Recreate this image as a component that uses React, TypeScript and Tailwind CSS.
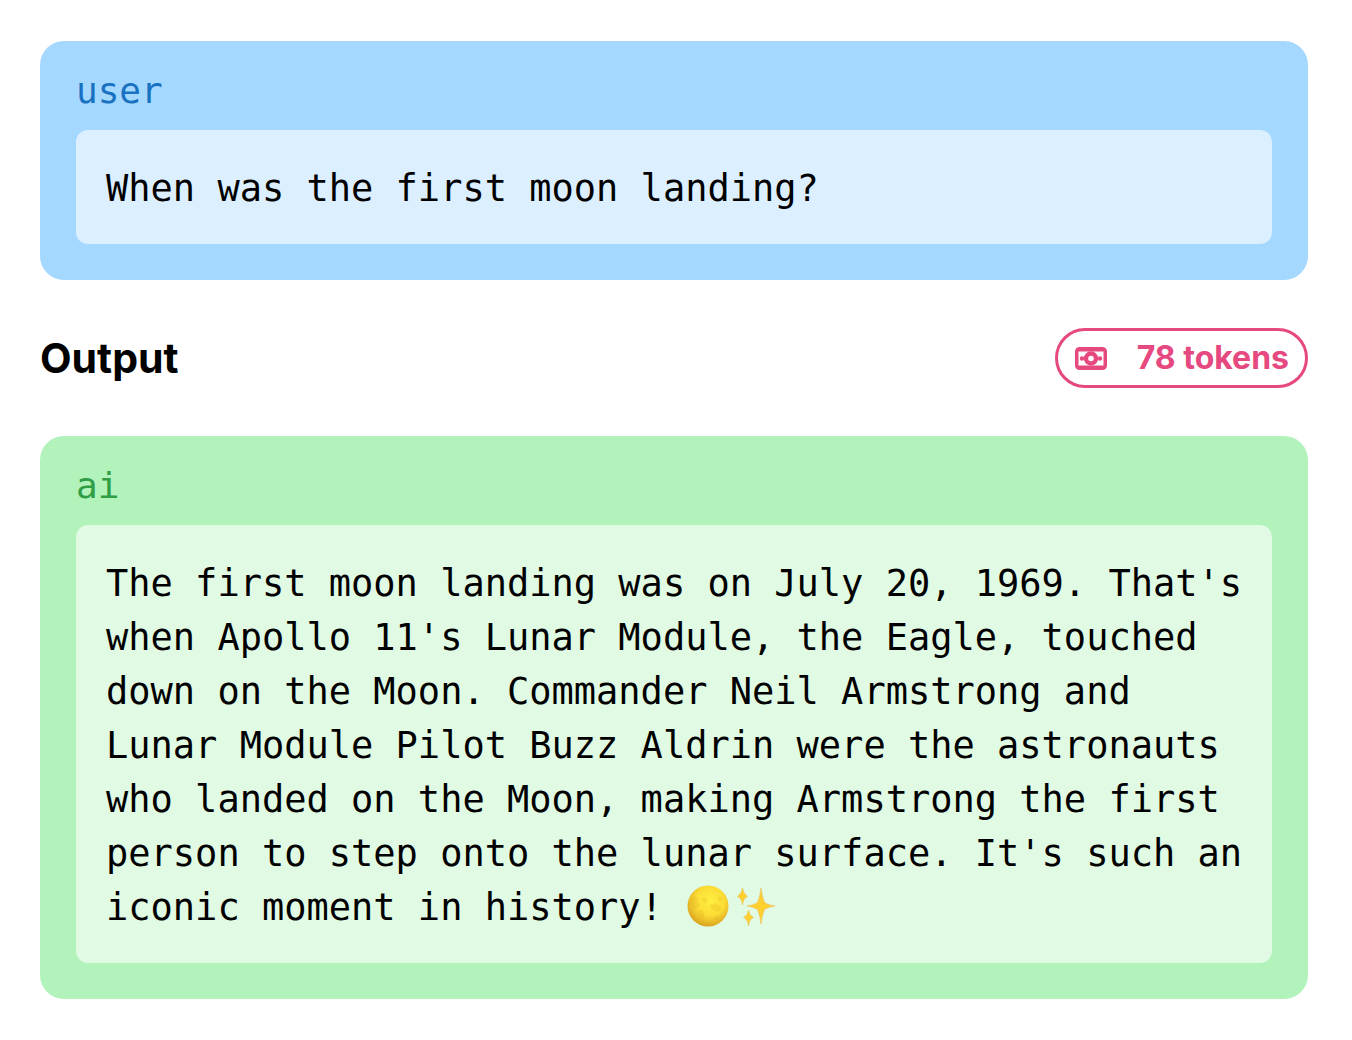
import React from "react";

type MessageProps = {
  role: string;
  cardClass: string;
  roleClass: string;
  bodyClass: string;
  children: React.ReactNode;
};

function Message({ role, cardClass, roleClass, bodyClass, children }: MessageProps) {
  return (
    <section className={`rounded-3xl px-9 pt-7 pb-9 ${cardClass}`}>
      <h3
        className={`mb-[17px] font-['DejaVu_Sans_Mono',monospace] text-[36px] leading-[44px] ${roleClass}`}
      >
        {role}
      </h3>
      <div className={`rounded-xl pt-8 pr-5 pb-7 pl-[30px] ${bodyClass}`}>
        <p className="font-['DejaVu_Sans_Mono',monospace] text-[37px] leading-[54px] text-black">
          {children}
        </p>
      </div>
    </section>
  );
}

function CashIcon() {
  return (
    <svg viewBox="0 0 32 23" className="h-[23px] w-8" fill="none" aria-hidden="true">
      <path
        fillRule="evenodd"
        clipRule="evenodd"
        d="M4.500 0H27.500A4.500 4.500 0 0 1 32 4.500V18.500A4.500 4.500 0 0 1 27.500 23H4.500A4.500 4.500 0 0 1 0 18.500V4.500A4.500 4.500 0 0 1 4.500 0ZM3.500 4.500V18.500H28.500V4.500Z"
        fill="currentColor"
      />
      <circle cx="16" cy="11.5" r="5" stroke="currentColor" strokeWidth="4.4" />
      <circle cx="7" cy="11.5" r="2.200" fill="currentColor" />
      <circle cx="25" cy="11.5" r="2.200" fill="currentColor" />
    </svg>
  );
}

function FullMoon() {
  return (
    <svg
      viewBox="0 3 48 42"
      className="mb-2 inline-block h-[42px] w-12 align-middle"
      role="img"
      aria-label="full moon"
    >
      <defs>
        <radialGradient id="moon" cx="0.55" cy="0.38" r="0.65">
          <stop offset="0" stopColor="#fff040" />
          <stop offset="0.55" stopColor="#fbdc35" />
          <stop offset="1" stopColor="#d79d1c" />
        </radialGradient>
      </defs>
      <circle cx="23" cy="24" r="20.5" fill="url(#moon)" />
      <g fill="#e0a820" opacity="0.22">
        <path d="M6 18Q10 12 13 16Q12 21 15 23Q13 28 8 27Q5 23 6 18Z" />
        <path d="M12 29Q16 26 19 30Q21 34 17 36Q13 34 12 29Z" />
        <path d="M25 23Q30 20 33 23Q37 24 36 28Q31 31 28 28Q26 27 25 23Z" />
        <path d="M17 17Q20 14 23 18Q22 22 19 21Z" />
        <circle cx="31" cy="36" r="2" />
        <circle cx="35" cy="17" r="2" />
      </g>
    </svg>
  );
}

function Sparkles() {
  return (
    <svg
      viewBox="0 3 48 42"
      className="mb-2 inline-block h-[42px] w-12 align-middle"
      role="img"
      aria-label="sparkles"
    >
      <g fill="#fdcf2f" stroke="#efbd55" strokeWidth="0.6">
        <path d="M28 6Q29 15 31.500 20.500Q35 23 42 24Q35 25 31.500 27.500Q29 33 28 42Q27 33 24.500 27.500Q21 25 14 24Q21 23 24.500 20.500Q27 15 28 6Z" />
        <path d="M9.500 6Q10.300 11.500 14.500 14.500Q10.300 16 9.500 23Q8.700 16 4.500 14.500Q8.700 11.500 9.500 6Z" />
        <path d="M15.500 28Q16.300 33.500 20.500 35.500Q16.300 37 15.500 44Q14.700 37 10.500 35.500Q14.700 33.500 15.500 28Z" />
      </g>
    </svg>
  );
}

export default function App() {
  return (
    <main className="flex min-h-screen flex-col gap-12 bg-white pt-[41px] pr-11 pb-10 pl-10">
      <Message
        role="user"
        cardClass="bg-[#a5d8ff]"
        roleClass="text-[#1971c2]"
        bodyClass="bg-[#dbefff]"
      >
        When was the first moon landing?
      </Message>

      <div className="flex items-center justify-between font-['Inter',sans-serif]">
        <h2 className="text-[41px] leading-[60px] font-bold text-black">Output</h2>
        <div className="flex h-[60px] items-center gap-[30px] rounded-full border-3 border-[#e64980] pr-4 pl-[17px] text-[#e64980]">
          <CashIcon />
          <span className="text-[32px] leading-[40px] font-bold">78 tokens</span>
        </div>
      </div>

      <Message
        role="ai"
        cardClass="bg-[#b2f2bb]"
        roleClass="text-[#2f9e44]"
        bodyClass="bg-[#e0fae4]"
      >
        The first moon landing was on July 20, 1969. That's when Apollo 11's
        Lunar Module, the Eagle, touched down on the Moon. Commander Neil
        Armstrong and Lunar Module Pilot Buzz Aldrin were the astronauts who
        landed on the Moon, making Armstrong the first person to step onto the
        lunar surface. It's such an iconic moment in history!{" "}
        <FullMoon />
        <Sparkles />
      </Message>
    </main>
  );
}
